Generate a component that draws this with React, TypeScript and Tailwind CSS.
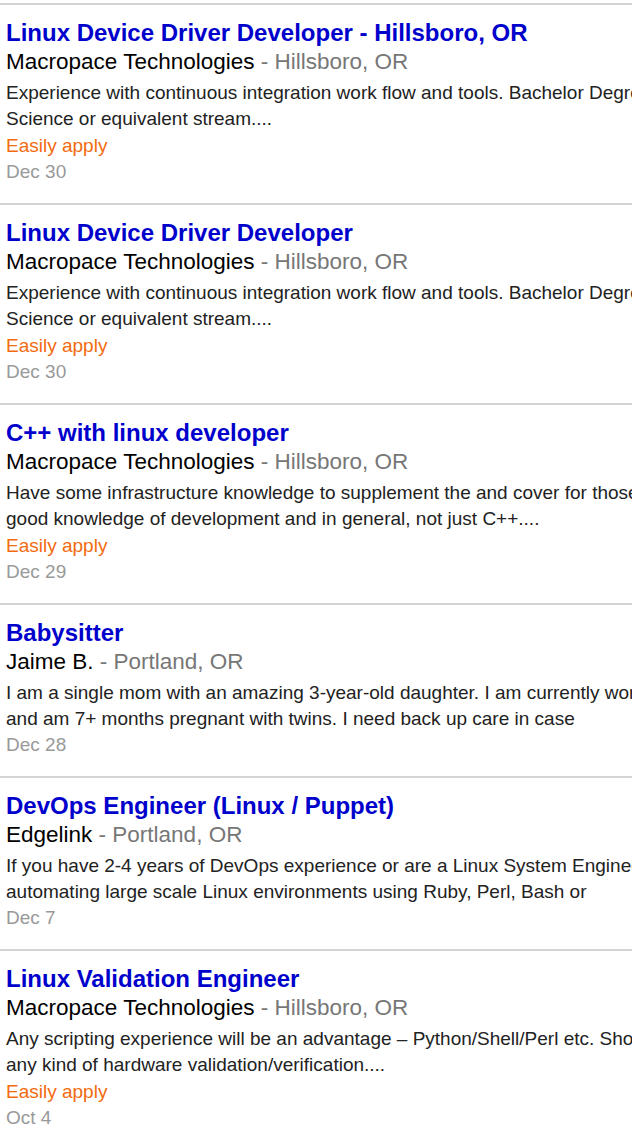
import React from 'react';

interface Job {
  title: string;
  company: string;
  location: string;
  snippet: string[];
  easyApply: boolean;
  date: string;
}

const jobs: Job[] = [
  {
    title: 'Linux Device Driver Developer - Hillsboro, OR',
    company: 'Macropace Technologies',
    location: 'Hillsboro, OR',
    snippet: [
      'Experience with continuous integration work flow and tools. Bachelor Degree in Computer',
      'Science or equivalent stream....',
    ],
    easyApply: true,
    date: 'Dec 30',
  },
  {
    title: 'Linux Device Driver Developer',
    company: 'Macropace Technologies',
    location: 'Hillsboro, OR',
    snippet: [
      'Experience with continuous integration work flow and tools. Bachelor Degree in Computer',
      'Science or equivalent stream....',
    ],
    easyApply: true,
    date: 'Dec 30',
  },
  {
    title: 'C++ with linux developer',
    company: 'Macropace Technologies',
    location: 'Hillsboro, OR',
    snippet: [
      'Have some infrastructure knowledge to supplement the and cover for those who have',
      'good knowledge of development and in general, not just C++....',
    ],
    easyApply: true,
    date: 'Dec 29',
  },
  {
    title: 'Babysitter',
    company: 'Jaime B.',
    location: 'Portland, OR',
    snippet: [
      'I am a single mom with an amazing 3-year-old daughter. I am currently working full time',
      'and am 7+ months pregnant with twins. I need back up care in case',
    ],
    easyApply: false,
    date: 'Dec 28',
  },
  {
    title: 'DevOps Engineer (Linux / Puppet)',
    company: 'Edgelink',
    location: 'Portland, OR',
    snippet: [
      'If you have 2-4 years of DevOps experience or are a Linux System Engineer with experience',
      'automating large scale Linux environments using Ruby, Perl, Bash or',
    ],
    easyApply: false,
    date: 'Dec 7',
  },
  {
    title: 'Linux Validation Engineer',
    company: 'Macropace Technologies',
    location: 'Hillsboro, OR',
    snippet: [
      'Any scripting experience will be an advantage \u2013 Python/Shell/Perl etc. Should have experience in',
      'any kind of hardware validation/verification....',
    ],
    easyApply: true,
    date: 'Oct 4',
  },
];

function JobRow({ job }: { job: Job }) {
  return (
    <div className="border-t-2 border-[#d4d4d4] pl-[6px] pt-[14px] pb-[18px]">
      <a href="#" className="block text-[24px] leading-[28px] font-bold text-[#0000cc] no-underline">
        {job.title}
      </a>
      <div className="text-[22.5px] leading-[30px] text-black">
        {job.company} <span className="text-[#777777]">- {job.location}</span>
      </div>
      <div className="mt-[3px] text-[19px] leading-[26px] text-[#222222]">
        {job.snippet.map((line, i) => (
          <div key={i} className="whitespace-nowrap">
            {line}
          </div>
        ))}
      </div>
      {job.easyApply && (
        <div className="mt-[1px] text-[19px] leading-[26px] text-[#f26b0f]">Easily apply</div>
      )}
      <div className="text-[19px] leading-[26px] text-[#999999]">{job.date}</div>
    </div>
  );
}

export default function App() {
  return (
    <div className="w-[632px] overflow-hidden bg-white font-['Liberation_Sans',Arial,sans-serif]">
      <div className="w-[1000px] pt-[3px]">
        {jobs.map((job, i) => (
          <JobRow key={i} job={job} />
        ))}
      </div>
    </div>
  );
}
